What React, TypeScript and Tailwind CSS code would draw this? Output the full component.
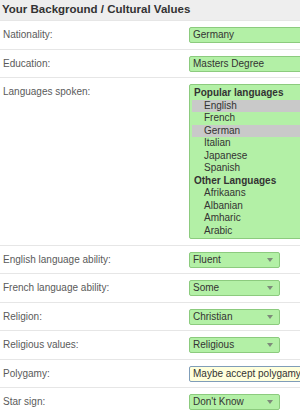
const groups = [
  {
    label: 'Popular languages',
    options: [
      { name: 'English', selected: true },
      { name: 'French', selected: false },
      { name: 'German', selected: true },
      { name: 'Italian', selected: false },
      { name: 'Japanese', selected: false },
      { name: 'Spanish', selected: false },
    ],
  },
  {
    label: 'Other Languages',
    options: [
      { name: 'Afrikaans', selected: false },
      { name: 'Albanian', selected: false },
      { name: 'Amharic', selected: false },
      { name: 'Arabic', selected: false },
    ],
  },
];

const selects = [
  { label: 'English language ability:', value: 'Fluent' },
  { label: 'French language ability:', value: 'Some' },
  { label: 'Religion:', value: 'Christian' },
  { label: 'Religious values:', value: 'Religious' },
];

function Row({ label, children }: { label: string; children: React.ReactNode }) {
  return (
    <div className="flex border-t border-[#e6e6e6] pt-[6px] pb-[5.5px]">
      <div className="w-[189px] shrink-0 pl-[3px] text-[10px] leading-[16px] text-[#5a5a5a]">
        {label}
      </div>
      {children}
    </div>
  );
}

function TextBox({ value }: { value: string }) {
  return (
    <div className="h-[16px] w-[130px] shrink-0 rounded-[2px] border border-[#8ccb7e] bg-[#b3f0a6] pl-[3px] text-[10px] leading-[14px] text-[#333]">
      {value}
    </div>
  );
}

function SelectBox({ value }: { value: string }) {
  return (
    <div className="flex h-[16px] w-[91px] shrink-0 items-center justify-between rounded-[2px] border border-[#8ccb7e] bg-[#b3f0a6] pl-[3px] pr-[6px] text-[10px] leading-[14px] text-[#333]">
      <span>{value}</span>
      <span className="h-0 w-0 border-x-[3px] border-t-[4px] border-x-transparent border-t-[#7d8a7a]" />
    </div>
  );
}

export default function App() {
  return (
    <div className="w-[300px] overflow-hidden bg-white font-['Liberation_Sans',Arial,sans-serif]">
      <div className="flex h-[20px] items-center bg-[#eeeeee] pl-[2px] text-[11.5px] font-bold text-[#333]">
        Your Background / Cultural Values
      </div>
      <Row label="Nationality:">
        <TextBox value="Germany" />
      </Row>
      <Row label="Education:">
        <TextBox value="Masters Degree" />
      </Row>
      <Row label="Languages spoken:">
        <div className="h-[155px] w-[130px] shrink-0 rounded-[2px] border border-[#8ccb7e] bg-[#b3f0a6] pt-[2px] text-[10px] leading-[12.5px] text-[#333]">
          {groups.map((group) => (
            <div key={group.label}>
              <div className="pl-[4px] font-bold">{group.label}</div>
              {group.options.map((opt) => (
                <div
                  key={opt.name}
                  className={opt.selected ? 'ml-[2px] bg-[#c9c9c9] pl-[12px]' : 'ml-[2px] pl-[12px]'}
                >
                  {opt.name}
                </div>
              ))}
            </div>
          ))}
        </div>
      </Row>
      {selects.map((s) => (
        <Row key={s.label} label={s.label}>
          <SelectBox value={s.value} />
        </Row>
      ))}
      <Row label="Polygamy:">
        <div className="h-[16px] w-[130px] shrink-0 rounded-[2px] border border-[#7f9db9] bg-[#ffffdc] pl-[3px] text-[10px] leading-[14px] text-[#333]">
          Maybe accept polygamy
        </div>
      </Row>
      <Row label="Star sign:">
        <SelectBox value="Don't Know" />
      </Row>
    </div>
  );
}
